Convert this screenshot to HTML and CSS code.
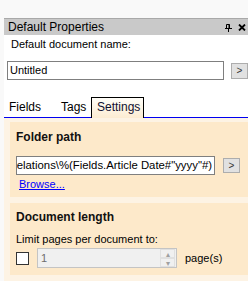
FILE: index.html
```html
<html>
<head>
  <link rel="stylesheet" href="styles.css">
</head>
<body>
  <div class="pane">
    <div class="titlebar">
      <span class="title">Default Properties</span>
      <span class="title-icons">
        <svg width="7" height="8" viewBox="0 0 7 8"><path d="M1.5 0.5h3v4h-3z M0 4.5h7 M3.5 4.5v3.5" fill="none" stroke="#000" stroke-width="1"/><path d="M4 0.5v4" stroke="#000" stroke-width="1"/></svg>
        <svg width="8" height="7" viewBox="0 0 8 7"><path d="M1 0.5l6 6M7 0.5l-6 6" stroke="#000" stroke-width="1.8"/></svg>
      </span>
    </div>
    <div class="content">
      <div class="label">Default document name:</div>
      <div class="name-row">
        <div class="textbox name-box">Untitled</div>
        <div class="small-btn name-btn">&gt;</div>
      </div>
      <div class="tabs">
        <div class="tab">Fields</div>
        <div class="tab">Tags</div>
        <div class="tab active">Settings</div>
      </div>
    </div>
    <div class="panel">
      <div class="group">
        <div class="group-title">Folder path</div>
        <div class="path-row">
          <div class="textbox path-box"><span>\\Server\Relations\%(Fields.Article Date#"yyyy"#)</span></div>
          <div class="small-btn">&gt;</div>
        </div>
        <a class="link" href="#">Browse...</a>
      </div>
      <div class="group">
        <div class="group-title">Document length</div>
        <div class="limit-label">Limit pages per document to:</div>
        <div class="limit-row">
          <div class="checkbox"></div>
          <div class="spin">
            <span class="spin-value">1</span>
            <div class="spin-btns">
              <div class="spin-btn">&#9652;</div>
              <div class="spin-btn">&#9662;</div>
            </div>
          </div>
          <span class="unit">page(s)</span>
        </div>
      </div>
    </div>
  </div>
</body>
</html>
```

FILE: styles.css
```css
* {
  box-sizing: border-box;
  margin: 0;
  padding: 0;
}

body {
  width: 248px;
  height: 281px;
  overflow: hidden;
  background-color: #f9f9f9;
  font-family: "Liberation Sans", Arial, sans-serif;
  font-size: 11px;
  color: #000;
}

.pane {
  margin-top: 18px;
  margin-left: 4px;
}

.titlebar {
  display: flex;
  align-items: center;
  justify-content: space-between;
  height: 17px;
  background-color: #c9c9c9;
  border-top: 1px solid #a9a9a9;
  padding-left: 4px;
  padding-right: 2px;
  font-size: 12px;
}

.title-icons {
  display: flex;
  align-items: center;
  gap: 6px;
  padding-top: 1px;
}

.content {
  background-color: #fff;
  padding-top: 3px;
}

.label {
  padding-left: 7px;
  line-height: 13px;
}

.name-row {
  display: flex;
  align-items: center;
  margin-top: 10px;
  padding-left: 3px;
}

.textbox {
  height: 19px;
  border: 1px solid #7f7f7f;
  background-color: #fff;
  padding-left: 2px;
  line-height: 17px;
  white-space: nowrap;
  overflow: hidden;
}

.name-box {
  width: 218px;
}

.small-btn {
  width: 17px;
  height: 15px;
  border: 1px solid #adadad;
  background-color: #e1e1e1;
  font-size: 10px;
  line-height: 13px;
  text-align: center;
  color: #333;
}

.name-btn {
  margin-left: 7px;
  height: 16px;
}

.tabs {
  display: flex;
  align-items: flex-end;
  margin-top: 17px;
  height: 21px;
  border-bottom: 1px solid #0000f0;
  font-size: 12px;
}

.tab {
  height: 20px;
  line-height: 20px;
  padding: 0 5px;
}

.tab:first-child {
  padding-left: 5px;
  width: 52px;
}

.tab:nth-child(2) {
  width: 35px;
}

.tab.active {
  width: 53px;
  border: 1px solid #000;
  border-bottom: none;
  height: 21px;
  margin-bottom: -1px;
  line-height: 19px;
  background: linear-gradient(#fffef9, #fcecd2);
  color: #101030;
}

.panel {
  background-color: #fdf3e4;
  padding: 4px 0 7px 6px;
}

.group {
  background-color: #fde9ca;
  padding: 8px 0 6px 6px;
}

.group + .group {
  margin-top: 6px;
  padding-top: 7px;
  padding-bottom: 7px;
}

.group-title {
  font-size: 12px;
  font-weight: bold;
  line-height: 14px;
  color: #111;
}

.path-row {
  display: flex;
  align-items: center;
  margin-top: 12px;
}

.path-box {
  width: 199px;
  display: flex;
  justify-content: flex-end;
  padding-right: 2px;
  font-size: 11.35px;
}

.path-row .small-btn {
  margin-left: 8px;
}

.link {
  display: inline-block;
  margin-top: 3px;
  margin-left: 3px;
  line-height: 13px;
  color: #0000ff;
}

.limit-label {
  margin-top: 9px;
  line-height: 13px;
}

.limit-row {
  display: flex;
  align-items: center;
  margin-top: 2px;
}

.checkbox {
  width: 13px;
  height: 13px;
  border: 1px solid #333;
  background-color: #fff;
}

.spin {
  display: flex;
  align-items: center;
  justify-content: space-between;
  width: 140px;
  height: 20px;
  margin-left: 8px;
  border: 1px solid #c4c4c4;
  background-color: #f0f0f0;
  color: #6d6d6d;
  padding-left: 3px;
}

.spin-btns {
  display: flex;
  flex-direction: column;
  width: 15px;
  height: 18px;
  margin-right: 1px;
}

.spin-btn {
  height: 9px;
  font-size: 8px;
  line-height: 9px;
  text-align: center;
  color: #a0a0a0;
  background-color: #f0f0f0;
  border: 1px solid #e0e0e0;
}

.unit {
  margin-left: 8px;
}
```
